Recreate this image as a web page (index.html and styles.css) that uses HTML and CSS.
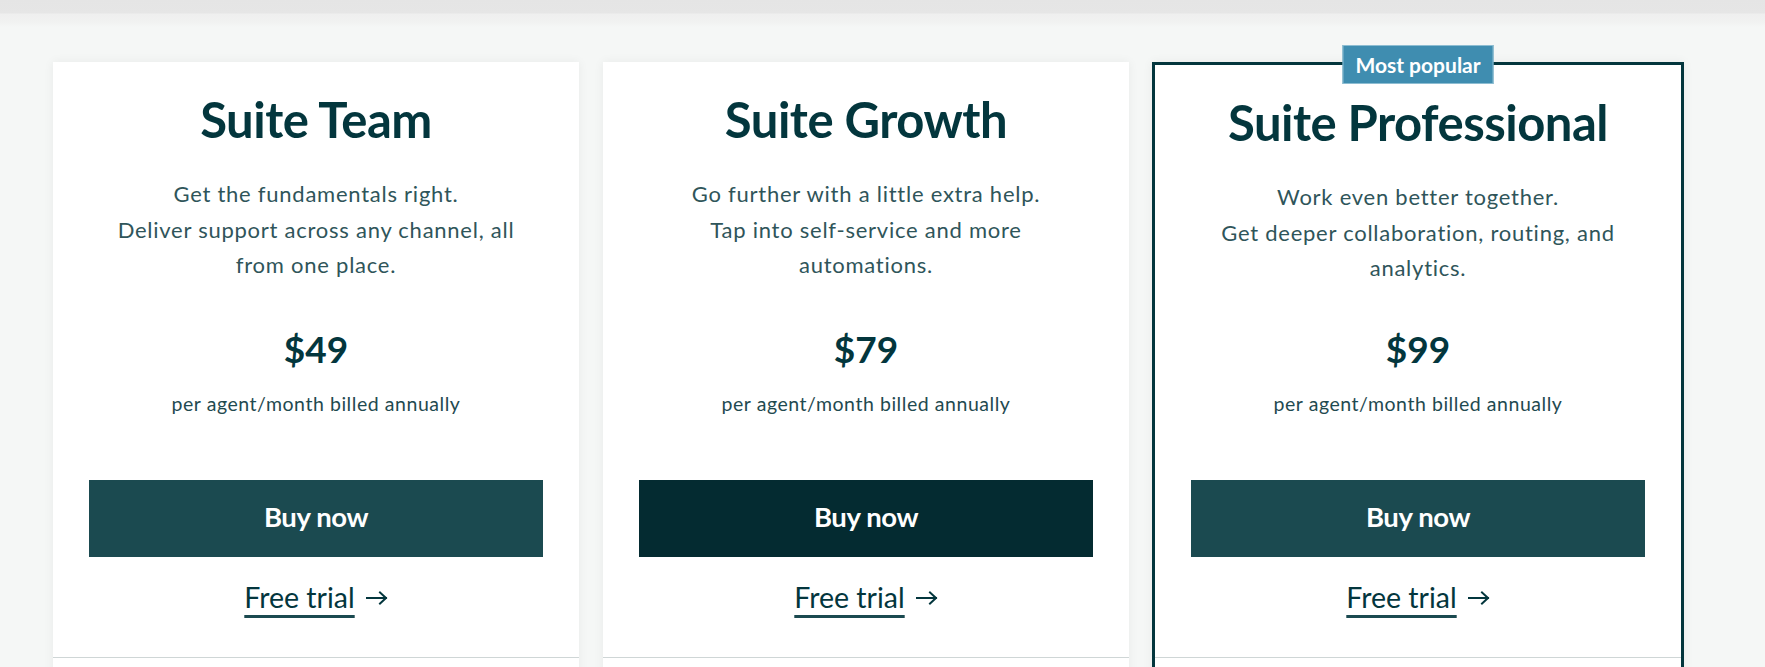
FILE: index.html
```html
<!DOCTYPE html>
<html lang="en">
<head>
<meta charset="utf-8">
<title>Pricing</title>
<link rel="stylesheet" href="styles.css">
</head>
<body>
<header class="topbar"></header>
<main class="plans">
  <section class="card">
    <h2 class="card__title">Suite Team</h2>
    <p class="card__desc">Get the fundamentals right.<br>Deliver support across any channel, all from one place.</p>
    <div class="card__price">$49</div>
    <div class="card__per">per agent/month billed annually</div>
    <a class="btn" href="#">Buy now</a>
    <a class="trial" href="#"><span class="trial__text">Free trial</span><svg class="trial__arrow" width="22" height="16" viewBox="0 0 22 16"><path d="M1 8H20M14 2.5L20 8L14 13.5" fill="none" stroke="#03363d" stroke-width="2" stroke-linecap="square"/></svg></a>
    <div class="card__foot"></div>
  </section>
  <section class="card">
    <h2 class="card__title">Suite Growth</h2>
    <p class="card__desc">Go further with a little extra help.<br>Tap into self-service and more automations.</p>
    <div class="card__price">$79</div>
    <div class="card__per">per agent/month billed annually</div>
    <a class="btn btn--dark" href="#">Buy now</a>
    <a class="trial" href="#"><span class="trial__text">Free trial</span><svg class="trial__arrow" width="22" height="16" viewBox="0 0 22 16"><path d="M1 8H20M14 2.5L20 8L14 13.5" fill="none" stroke="#03363d" stroke-width="2" stroke-linecap="square"/></svg></a>
    <div class="card__foot"></div>
  </section>
  <section class="card card--featured">
    <div class="badge">Most popular</div>
    <h2 class="card__title">Suite Professional</h2>
    <p class="card__desc">Work even better together.<br>Get deeper collaboration, routing, and analytics.</p>
    <div class="card__price">$99</div>
    <div class="card__per">per agent/month billed annually</div>
    <a class="btn" href="#">Buy now</a>
    <a class="trial" href="#"><span class="trial__text">Free trial</span><svg class="trial__arrow" width="22" height="16" viewBox="0 0 22 16"><path d="M1 8H20M14 2.5L20 8L14 13.5" fill="none" stroke="#03363d" stroke-width="2" stroke-linecap="square"/></svg></a>
    <div class="card__foot"></div>
  </section>
</main>
</body>
</html>
```
FILE: styles.css
```css
* { box-sizing: border-box; }

html, body {
  margin: 0;
  padding: 0;
  background: #f5f7f6;
  font-family: Lato, "Liberation Sans", sans-serif;
  color: #03363d;
  overflow: hidden;
}

.topbar {
  height: 27px;
  background: linear-gradient(to bottom, #e5e5e5 0, #e6e6e6 13px, #efefef 14px, #f1f2f1 22px, #f5f7f6 27px);
}

.plans {
  display: flex;
  align-items: flex-start;
  gap: 24px;
  padding: 35px 0 0 53px;
}

.card {
  position: relative;
  width: 526px;
  flex: none;
  background: #ffffff;
  box-shadow: 0 0 10px rgba(0, 0, 0, 0.06);
  padding: 28px 36px 0;
  display: flex;
  flex-direction: column;
  align-items: center;
  text-align: center;
}

.card--featured {
  width: 532px;
  margin-left: -1px;
  border: 3px solid #03363d;
  border-bottom: none;
}

.badge {
  position: absolute;
  top: -20px;
  left: 50%;
  transform: translateX(-50%);
  width: 151px;
  height: 39px;
  background: #3f8db0;
  border: 1px solid #8dbdd2;
  color: #ffffff;
  font-size: 21px;
  font-weight: 700;
  letter-spacing: 0;
  display: flex;
  align-items: center;
  justify-content: center;
}

.card__title {
  margin: 0;
  font-size: 49px;
  line-height: 59px;
  font-weight: 700;
  letter-spacing: -0.5px;
  color: #03363d;
}

.card__desc {
  margin: 27px 0 0;
  font-size: 22px;
  line-height: 35.5px;
  letter-spacing: 0.75px;
  color: #2f555a;
  max-width: 420px;
}

.card__price {
  margin-top: 44px;
  font-size: 37px;
  line-height: 44px;
  font-weight: 700;
  color: #03363d;
}

.card--featured .card__price {
  margin-top: 41px;
}

.card__per {
  margin-top: 21px;
  font-size: 19.5px;
  line-height: 24px;
  letter-spacing: 0.55px;
  color: #1f4a50;
}

.btn {
  margin-top: 64px;
  align-self: stretch;
  height: 77px;
  padding-bottom: 3px;
  background: #1b4a50;
  color: #ffffff;
  text-decoration: none;
  font-size: 27.5px;
  font-weight: 700;
  letter-spacing: -0.4px;
  display: flex;
  align-items: center;
  justify-content: center;
}

.btn--dark {
  background: #042b31;
}

.trial {
  margin-top: 24px;
  display: flex;
  align-items: center;
  gap: 11px;
  color: #03363d;
  text-decoration: none;
  font-size: 28.5px;
  line-height: 32px;
  letter-spacing: 0;
}

.trial__text {
  text-decoration: underline;
  text-decoration-color: #1b4a50;
  text-decoration-thickness: 3px;
  text-underline-offset: 7px;
}

.trial__arrow {
  margin-top: 2px;
}

.card__foot {
  align-self: stretch;
  margin: 44px -36px 0;
  height: 80px;
  border-top: 1px solid #cfd6d6;
}
```
